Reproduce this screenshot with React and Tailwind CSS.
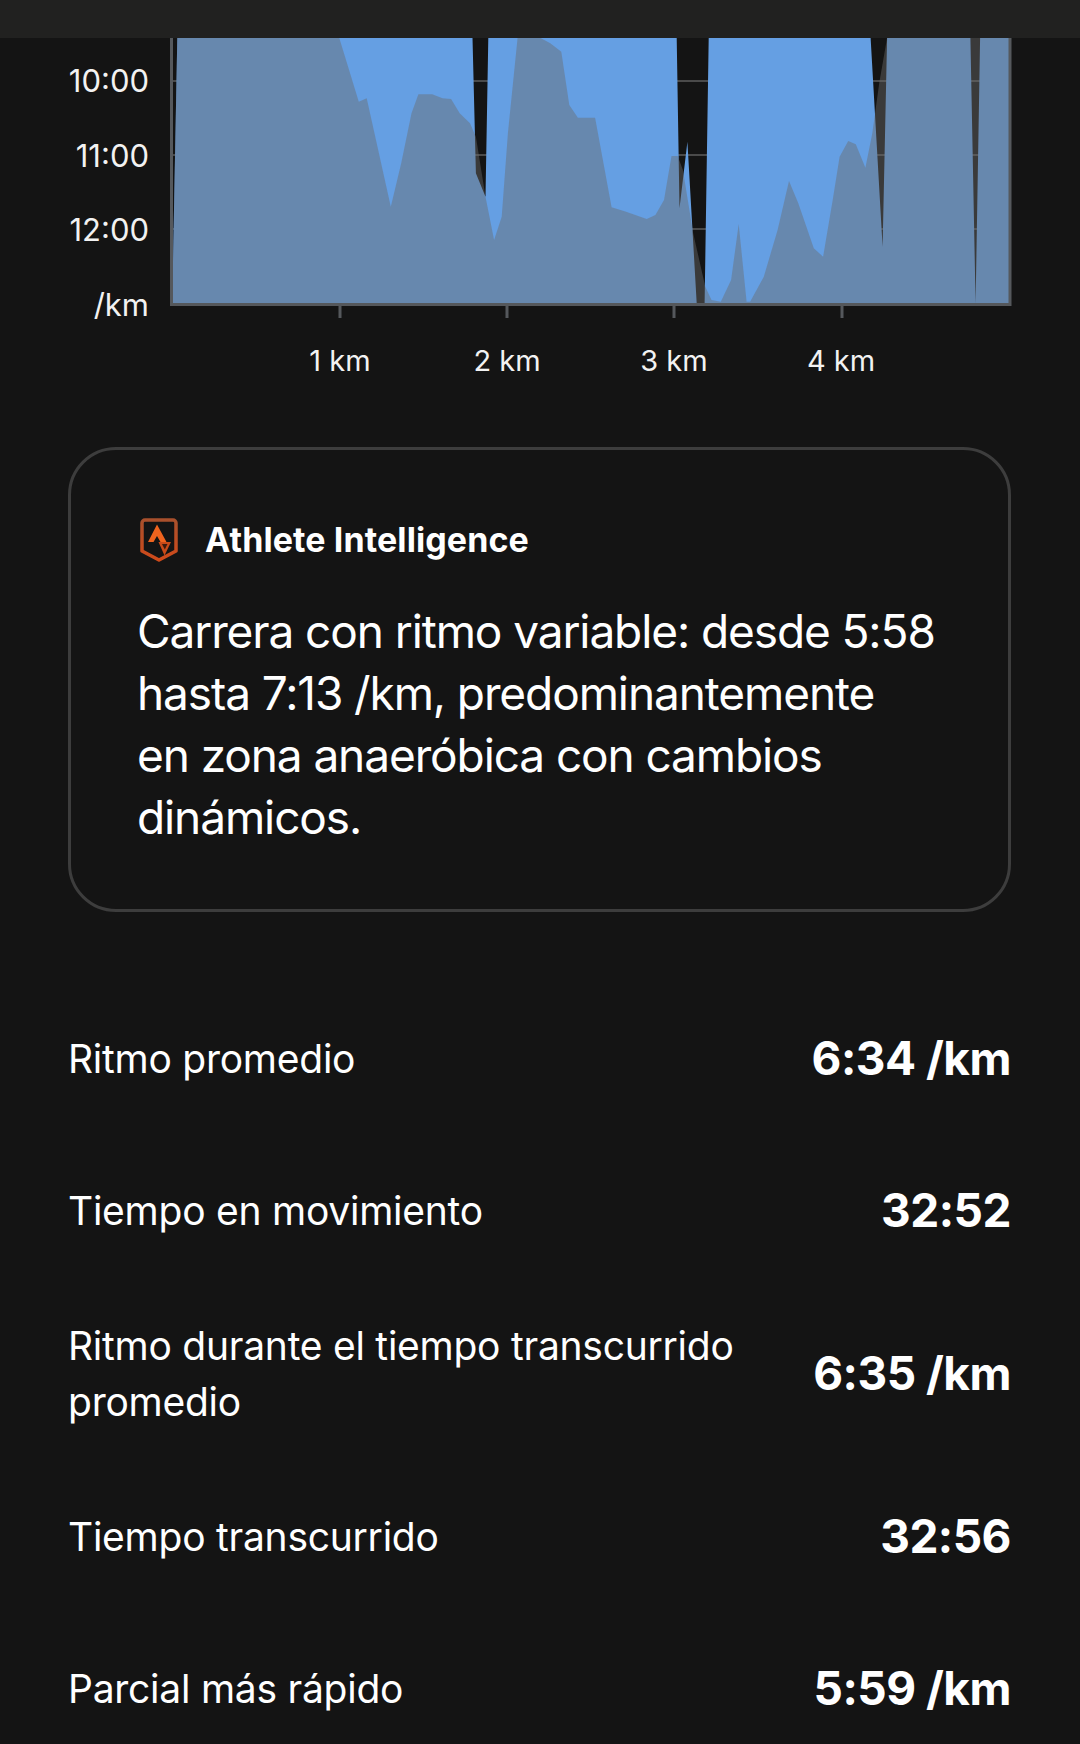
const FONT = { fontFamily: 'Inter, "Noto Sans", sans-serif' }

// points read off the chart, in page px relative to the svg (x-170, y-38)
const toPts = (list) => list.map(([x, y]) => `${(x - 170).toFixed(1)},${(y - 38).toFixed(1)}`).join(' ')
const L = (x, y) => [x / 2.904, y / 3]
const R = (x, y) => [540 + x / 2.904, y / 3]

const pace = [
  L(500, 910), L(515, 113), L(1372, 113), L(1382, 520), L(1410, 590), L(1418, 113),
  R(397, 113), R(405, 625), R(428, 425), R(455, 910), R(478, 910), R(490, 113),
  R(960, 113), R(995, 740), R(1008, 113), R(1250, 113), R(1265, 910), R(1278, 113),
  R(1365, 113), R(1365, 910),
]

const elevation = [
  L(500, 910), L(515, 113), L(985, 113), L(1042, 305), L(1065, 295), L(1135, 620),
  L(1165, 490), L(1195, 340), L(1215, 283), L(1255, 283), L(1285, 295), L(1310, 297),
  L(1335, 340), L(1365, 370), L(1382, 410), L(1410, 590), L(1435, 720), L(1457, 650),
  L(1475, 400), L(1503, 113), R(0, 113), R(30, 130), R(62, 155), R(85, 315),
  R(110, 353), R(160, 353), R(208, 622), R(250, 635), R(310, 657), R(335, 645),
  R(360, 600), R(382, 468), R(400, 468), R(415, 510), R(445, 700), R(480, 860),
  R(498, 900), R(525, 905), R(555, 840), R(577, 672), R(600, 905), R(610, 905),
  R(650, 830), R(690, 690), R(723, 543), R(750, 610), R(795, 745), R(822, 770),
  R(850, 600), R(870, 470), R(895, 423), R(917, 433), R(945, 503), R(965, 400),
  R(985, 250), R(1008, 113), R(1365, 113), R(1365, 910),
]

const yLabels = ['10:00', '11:00', '12:00', '/km']
const xLabels = ['1 km', '2 km', '3 km', '4 km']

const stats = [
  { label: 'Ritmo promedio', value: '6:34 /km' },
  { label: 'Tiempo en movimiento', value: '32:52' },
  { label: 'Ritmo durante el tiempo transcurrido promedio', value: '6:35 /km' },
  { label: 'Tiempo transcurrido', value: '32:56' },
  { label: 'Parcial más rápido', value: '5:59 /km' },
]

function PaceChart() {
  return (
    <svg width="844" height="282" viewBox="0 0 844 282" className="block">
      {/* grid lines sit under the fills, only seen through the gaps */}
      {[43, 117, 191].map((y) => (
        <line key={y} x1="0" x2="840" y1={y} y2={y} stroke="#4a4a4a" strokeWidth="2" />
      ))}
      <polygon points={toPts(pace)} fill="#659fe3" />
      <polygon points={toPts(elevation)} fill="#6b6b6b" fillOpacity="0.44" />
      <path d="M1.5 0V266.5H840V0" fill="none" stroke="#55585c" strokeWidth="3" />
      {[170, 337, 504, 672].map((x) => (
        <line key={x} x1={x} x2={x} y1="267" y2="280" stroke="#55585c" strokeWidth="3" />
      ))}
    </svg>
  )
}

function AthleteIcon() {
  return (
    <svg width="38" height="44" viewBox="0 0 38 44" fill="none" className="ml-[3px]">
      <defs>
        <linearGradient id="shield" x1="0" y1="0" x2="0" y2="1">
          <stop offset="0" stopColor="#a9502c" />
          <stop offset="1" stopColor="#d04a1a" />
        </linearGradient>
      </defs>
      <path
        d="M5 2H33A3 3 0 0 1 36 5V33L19 42L2 33V5A3 3 0 0 1 5 2Z"
        stroke="url(#shield)"
        strokeWidth="3.5"
        strokeLinejoin="round"
      />
      <path d="M17 6.5L26.5 24H20.5L17 18L13.5 24H8Z" fill="#f0641e" />
      <path d="M18.5 24H31L24.5 37.5Z" fill="#c94a18" />
      <path d="M22 26H27.5L24.8 31.5Z" fill="#3a1a0e" />
    </svg>
  )
}

export default function App() {
  return (
    <div className="h-[1744px] overflow-hidden bg-[#141414] text-white" style={FONT}>
      <div className="h-[38px] bg-[#212120]" />

      <div className="flex h-[282px]">
        <div className="w-[149px] pt-[16px] text-right text-[31px] text-[#f2f2f2]">
          {yLabels.map((t) => (
            <div key={t} className="h-[74.5px] leading-[54px]">{t}</div>
          ))}
        </div>
        <div className="ml-[21px]">
          <PaceChart />
        </div>
      </div>

      <div className="mt-[24px] flex pl-[256.5px] text-[29px] leading-[34px] text-[#f2f2f2]">
        {xLabels.map((t) => (
          <div key={t} className="w-[167px] text-center">{t}</div>
        ))}
      </div>

      <div className="ml-[68px] mr-[69px] mt-[69px] h-[465px] rounded-[48px] border-[3px] border-[#3d3d3d] pl-[66px] pt-[67px]">
        <div className="flex items-center gap-[27px]">
          <AthleteIcon />
          <span className="text-[34px] font-bold leading-[46px] tracking-[0.1px]">Athlete Intelligence</span>
        </div>
        <p className="mt-[37px] w-[798px] text-[46px] leading-[62px] tracking-[-1.1px]">
          Carrera con ritmo variable: desde 5:58 hasta 7:13 /km, predominantemente en zona anaeróbica con cambios dinámicos.
        </p>
      </div>

      <div className="ml-[68px] mr-[69px] mt-[102px] flex flex-col gap-[62px]">
        {stats.map((s) => (
          <div key={s.label} className="flex min-h-[90px] items-center justify-between">
            <div className="w-[680px] text-[39px] leading-[56px] tracking-[-0.25px]">{s.label}</div>
            <div className="pb-[2px] text-[46px] font-bold leading-[60px] tracking-[-0.5px]">{s.value}</div>
          </div>
        ))}
      </div>
    </div>
  )
}
